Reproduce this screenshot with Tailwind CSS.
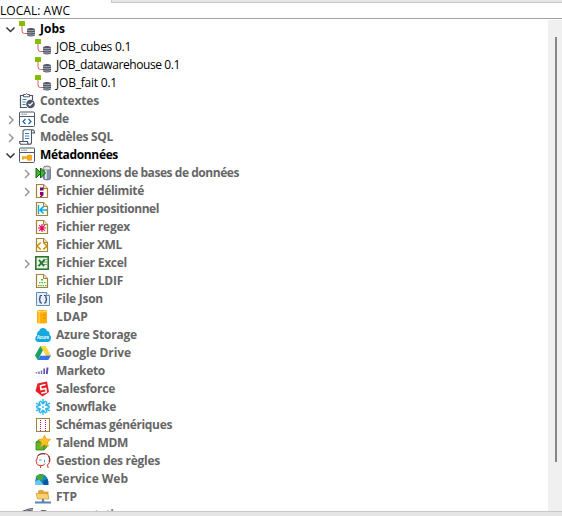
<!DOCTYPE html>
<html lang="fr">
<head>
<meta charset="utf-8">
<title>LOCAL: AWC</title>
<script src="https://cdn.jsdelivr.net/npm/@tailwindcss/browser@4"></script>
</head>
<body class="bg-white">
<main class="flex h-[516px] w-[562px] flex-col overflow-hidden bg-white font-['Open_Sans','Noto_Sans',sans-serif] text-[12px] text-black">
  <div class="flex h-[3px] shrink-0"><div class="w-[111px]"></div><div class="flex-1 border-b border-l border-[#c8c8c8] bg-[#e5e5e5]"></div></div>
  <header class="flex h-4 shrink-0 items-center border-b border-[#a0a0a0] leading-4"><span data-w="69" class="inline-block whitespace-nowrap">LOCAL: AWC</span></header>
  <section class="mt-px flex h-[491px] shrink-0">
    <div id="tree" class="h-full flex-1 overflow-hidden"></div>
    <div class="w-[14px] bg-[#f0f0f0] pt-[17px] pl-[7px]"><div class="h-[425px] w-[2px] bg-[#868686]"></div></div>
  </section>
  <footer class="h-[5px] shrink-0 border-t border-[#c8c8c8] bg-[#e5e5e5]"></footer>
</main>
<script>
const page = (inner) => `<path d="M1.500 1.500h7l4 4v9h-11z" fill="#fffdf3" stroke="#a1843c" stroke-width="1.200"/><path d="M8.500 1.500v4h4" fill="#efe3b8" stroke="#a1843c"/><g transform="translate(-1 0)">${inner}</g>`;
const win = (inner) => `<rect x=".5" y="1" width="15" height="14.500" rx="1" fill="#fff" stroke="#4d5666"/><path d="M1 5.500h14" stroke="#4d5666"/><path d="M2.500 3.200h6" stroke="#4d5666" stroke-dasharray="1.200 .8"/>${inner}`;
const icons = {
  job: `<path d="M3 5v5q0 2.500 2.500 2.500H8" fill="none" stroke="#d9605b"/><rect x="0" y="0" width="6" height="5" rx=".6" fill="#84bd00"/><path d="M8 8q4-2 8 0V14.500q-4 2-8 0z" fill="#4c5361"/><path d="M8 9.100q4 1.300 8 0M8 11.300q4 1.300 8 0M8 13.500q4 1.300 8 0" fill="none" stroke="#c9ced8" stroke-width=".7"/>`,
  contextes: `<path d="M5 2.500H1.500v12H8M11 2.500h2.500V7" fill="none" stroke="#4d5666" stroke-width="1.200"/><path d="M4.500 3.800V1.500h2Q7.500-.2 8.500 1.500h2v2.300z" fill="#fff" stroke="#4d5666"/><path d="M3.500 6.500h4M3.500 9h3M3.500 11.500h3" stroke="#2a83c4"/><circle cx="11.500" cy="11" r="4.300" fill="#4d5666"/><path d="M9.500 11l1.500 1.500 2.700-3" fill="none" stroke="#fff" stroke-width="1.200"/>`,
  code: win(`<path d="M6.500 8l-2.500 2.500 2.500 2.500M9.500 8l2.500 2.500-2.500 2.500" fill="none" stroke="#1c65a5" stroke-width="1.200"/>`),
  sql: `<path d="M4 12V3Q4 .8 6 .8h7.500Q15.500.8 15.500 4H12.500V13q0 2.300-2 2.300H2.500Q.6 15.300.6 12.500H8.500q0 2.800 2 2.800M13.500.8q-1.200.4-1.100 3.200" fill="none" stroke="#4d5666" stroke-width="1.100"/><path d="M6 4.500h4M6 7h4M6 9.500h4" stroke="#2a83c4"/>`,
  meta: win(`<path d="M3 9.200h5v-1q2.500-1.500 5 0v5q-2.500 1.300-5 0v-1.400H5v.8H3z" fill="#f5a623"/>`),
  conn: `<path d="M8 3.500q0-2.500 4-2.500t4 2.500v9q0 2.500-4 2.500t-4-2.500z" fill="#8793ad" stroke="#5b6682" stroke-width=".7"/><path d="M10 4h1.800v10H10z" fill="#dce4f2"/><ellipse cx="12" cy="3.200" rx="3.800" ry="1.800" fill="#e6e4cc" stroke="#77809a" stroke-width=".6"/><path d="M1 3l5 5-5 5z M5.500 3l5 5-5 5z" fill="#43b62f" stroke="#116411"/>`,
  delim: page(`<path d="M6 4.500h3.500v3H6zM6 9h3.500v3l-2 2H6v-1.300h1V12H6z" fill="#850078"/>`),
  pos: page(`<path d="M4.500 4v9" stroke="#06a8ec" stroke-width="1.300"/><path d="M13 9H6M9.500 5.500L6 9l3.500 3.500" fill="none" stroke="#06a8ec" stroke-width="1.600"/>`),
  regex: page(`<path d="M8 5v8M4 9h8M5.200 6.200l5.600 5.600M10.800 6.200l-5.600 5.600" stroke="#e3005f" stroke-width="1.100"/>`),
  xml: page(`<path d="M6.700 5.500L3 9l3.700 3.500M9.300 5.500L13 9l-3.700 3.500" fill="none" stroke="#d08b00" stroke-width="1.500"/>`),
  excel: `<rect x=".8" y="1.800" width="12.400" height="12.400" fill="#edf5ea" stroke="#30742f" stroke-width="1.600"/><path d="M8 4.500h4M8 7h4M8 9.500h4" stroke="#76a06b"/><path d="M4 4.800l5 6.400M9.500 4.800l-6 6.400" stroke="#237b2f" stroke-width="1.900"/>`,
  ldif: page(`<path d="M7 6h2v1.500H7zM5 9h1.500v1.300H5zM7.500 9H9v1.300H7.500zM10 9h1.500v1.300H10zM4 12h1.500v1.300H4zM6.300 12h1.400v1.300H6.300zM8.600 12H10v1.300H8.600zM11 12h1.400v1.300H11z" fill="#46b63c"/>`),
  json: `<path d="M1.500 1.500h10l3 3v10h-13z" fill="#e4effb" stroke="#6489ba"/><path d="M11.500 1.500v3h3" fill="#fff" stroke="#6489ba"/><path d="M7 4.500H6q-1 0-1 1.200V7Q5 8 4 8.300q1 .2 1 1.200v1.300Q5 12 6 12h1M9 4.500h1q1 0 1 1.200V7q0 1 1 1.300-1 .2-1 1.200v1.300Q11 12 10 12H9" fill="none" stroke="#263d5c" stroke-width="1.200"/>`,
  ldap: `<path d="M2 2q0-1 5-1t5 1v11.500q0 1-5 1t-5-1z" fill="#ffad08"/><path d="M2.500 2.300q4.500 1.300 9 0" fill="none" stroke="#ffdf79"/><path d="M4.200 3v11" stroke="#ffd04a" stroke-width="1.500"/><path d="M8 6h3M8 9h3" stroke="#ed8a00"/>`,
  azure: `<path d="M3.500 15Q0 14.700.3 11.500.5 9 2 8.600 1.500 4.500 4.300 3.700 5 .7 8.500 1q3 .3 3.500 3 3 .2 2.500 3.800 2 1.200 1.400 4-.6 3.200-3.200 3.200z" fill="#17a8df"/><text x="8" y="12" text-anchor="middle" font-size="5" font-weight="700" textLength="12" lengthAdjust="spacingAndGlyphs" fill="#fff">Azure</text>`,
  drive: `<path d="M5.300 1h5.200L16 10.500h-5.300z" fill="#ffd33c"/><path d="M5.300 1L8 5.600 2.700 15 0 10.500z" fill="#13a35c"/><path d="M5.300 10.500H16L13.300 15H2.700z" fill="#3975e8"/><path d="M8 5.600l2.700 4.900H5.300z" fill="#fff"/>`,
  marketo: `<path d="M1.500 9v1.500M4 8.500v2.500M6.500 7.500v3.500" stroke="#7770b8" stroke-width="1.500"/><path d="M9.200 5.500v5.500" stroke="#5d54a4" stroke-width="1.600"/><path d="M12.500 4.500L11.800 11" stroke="#5d54a4" stroke-width="2"/>`,
  sales: `<path d="M2.500 2.500L12 .5l2 10.500-6.500 4.500L.5 10z" fill="#e51f25"/><path d="M10.500 3.500l-5 1.300.5 3.700 4.700-1 .6 3.500-5 1.300" fill="none" stroke="#fff" stroke-width="1.600"/>`,
  snow: `<g fill="none" stroke="#29b5e8" stroke-width="1.400" stroke-linecap="round">${[0, 60, 120, 180, 240, 300].map(a => `<path d="M8 .6v3.600M5.500 2.200L8 4.700l2.500-2.500" transform="rotate(${a} 8 8)"/>`).join('')}</g><path d="M8 6.800L9.200 8 8 9.200 6.800 8z" fill="#29b5e8"/>`,
  schema: `<rect x="1.500" y="1.500" width="13" height="13" fill="#fffdf4" stroke="#a1843c"/><path d="M5.500 3v11M10.500 3v11" stroke="#9b1fa0" stroke-dasharray="1 1"/>`,
  mdm: `<path d="M1 7l3-2h8v7l-3 3H1z" fill="#64b72d" stroke="#398619" stroke-width=".8"/><path d="M1 7h8v8M9 7l3-2" fill="none" stroke="#398619" stroke-width=".8"/><path d="M9.500.2l1.800 3.700 4.200.5-3 3 .8 4.200-3.800-2-3.700 2.100.7-4.200-3-2.900 4.200-.6z" fill="#ffc229" stroke="#f29d0c" stroke-width=".8"/>`,
  rules: `<path d="M5.500 15l.3-2.500Q1 12.500 1.800 9L.8 8.200 2 6Q2 .5 8 .5q6.500 0 7 6 0 3.500-2.500 5.500l.7 3" fill="none" stroke="#d62c25"/><path d="M3 2.500Q6 0 10 1M13.500 3q1.800 3 .5 6" fill="none" stroke="#333" stroke-width=".8"/><path d="M4 7h2.500M9.500 7v2.500" stroke="#35a8d8"/><path d="M6 12.500q3 .5 4-2" fill="none" stroke="#d62c25"/>`,
  web: `<path d="M0 14Q0 2.500 6 3q5 .2 7 5.500V14z" fill="#1684c4"/><path d="M.3 6Q3 3 7.500 3L9.500 5 7.500 6 9 8 4.800 9.500 2.500 8z" fill="#4aa53a"/><path d="M7 14l2-4.500 3-1.500 1.500 2.500V14z" fill="#07599b"/><path d="M0 10.500l4-2 5 5.500H0z" fill="#6bc5ee"/>`,
  ftp: `<path d="M3 2.500l1-1.500h4l1 1.500h4.500V10H3z" fill="#dfa93b"/><path d="M1 4.500h11.500L14 10H2.500z" fill="#f8d36d" stroke="#c98f27" stroke-width=".6"/><path d="M8 10v4M0 13.500h16" stroke="#5684b5" stroke-width="2.200"/>`,
  doc: `<path d="M3 4.500L10 2l4-.5M2 7l8-3.500 4-.5" fill="none" stroke="#4d5666" stroke-width="1.200"/>`
};
// label, level, icon, disclosure, tone, label width in px
const rows = [
  ['Jobs',0,'job','open','strong',24],
  ['JOB_cubes 0.1',1,'job','','plain',74],
  ['JOB_datawarehouse 0.1',1,'job','','plain',123],
  ['JOB_fait 0.1',1,'job','','plain',60],
  ['Contextes',0,'contextes','','dim',58],
  ['Code',0,'code','closed','dim',28],
  ['Modèles SQL',0,'sql','closed','dim',72],
  ['Métadonnées',0,'meta','open','strong',77],
  ['Connexions de bases de données',1,'conn','closed','dim',182],
  ['Fichier délimité',1,'delim','closed','dim',87],
  ['Fichier positionnel',1,'pos','','dim',102],
  ['Fichier regex',1,'regex','','dim',73],
  ['Fichier XML',1,'xml','','dim',65],
  ['Fichier Excel',1,'excel','closed','dim',70],
  ['Fichier LDIF',1,'ldif','','dim',66],
  ['File Json',1,'json','','dim',46],
  ['LDAP',1,'ldap','','dim',31],
  ['Azure Storage',1,'azure','','dim',80],
  ['Google Drive',1,'drive','','dim',74],
  ['Marketo',1,'marketo','','dim',48],
  ['Salesforce',1,'sales','','dim',58],
  ['Snowflake',1,'snow','','dim',59],
  ['Schémas génériques',1,'schema','','dim',115],
  ['Talend MDM',1,'mdm','','dim',71],
  ['Gestion des règles',1,'rules','','dim',103],
  ['Service Web',1,'web','','dim',71],
  ['FTP',1,'ftp','','dim',20],
  ['Documentation',0,'doc','','dim',87]
];
const tones = { strong: 'font-bold text-black', plain: 'text-black', dim: 'font-bold text-[#666666]' };
const arrows = {
  open: '<path d="M2.500 7.500l4 4 4-4" fill="none" stroke="#333" stroke-width="1.500"/>',
  closed: '<path d="M5 6l4 4-4 4" fill="none" stroke="#999" stroke-width="1.500"/>',
  '': ''
};
document.getElementById('tree').innerHTML = rows.map(([label, level, icon, arrow, tone, w]) => `
<div class="flex h-[18px] items-center ${level ? 'pl-5' : 'pl-1'}">
  <svg class="h-[18px] w-[15px] shrink-0" viewBox="0 0 15 18">${arrows[arrow]}</svg>
  <svg class="h-4 w-4 shrink-0" viewBox="0 0 16 16">${icons[icon]}</svg>
  <span data-w="${w}" class="ml-[5px] inline-block leading-[18px] whitespace-nowrap ${tones[tone]}">${label}</span>
</div>`).join('');
// Spread each label's letters over its width once the fonts are ready.
function fit() {
  document.querySelectorAll('[data-w]').forEach(el => {
    el.style.letterSpacing = '0px';
    const gap = (Number(el.dataset.w) + 1 - el.getBoundingClientRect().width) / el.textContent.length;
    el.style.letterSpacing = `${gap.toFixed(3)}px`;
  });
}
fit();
window.addEventListener('load', () => { fit(); document.fonts.ready.then(fit); });
</script>
</body>
</html>
